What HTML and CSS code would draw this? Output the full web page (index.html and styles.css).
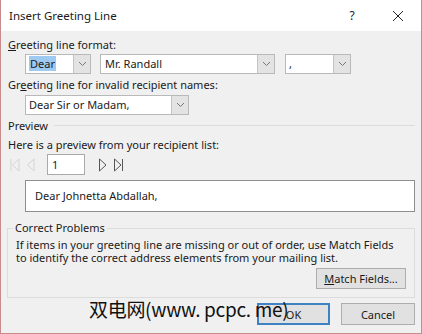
FILE: index.html
```html
<!DOCTYPE html>
<html>
<head>
<meta charset="utf-8">
<link rel="stylesheet" href="styles.css">
</head>
<body>
<div class="dialog">
  <div class="titlebar">
    <span class="title">Insert Greeting Line</span>
    <span class="help">?</span>
    <svg class="close" width="12" height="12" viewBox="0 0 12 12"><path d="M1 1L11 11M11 1L1 11" stroke="#222" stroke-width="1" fill="none"/></svg>
  </div>
  <div class="content">
    <div class="label l1"><u>G</u>reeting line format:</div>
    <div class="row combos">
      <div class="combo c-dear"><span class="val"><span class="sel">Dear</span></span><span class="arrow"><svg width="9" height="6" viewBox="0 0 9 6"><path d="M1 1L4.5 4.5L8 1" stroke="#777" fill="none"/></svg></span></div>
      <div class="combo c-name"><span class="val">Mr. Randall</span><span class="arrow"><svg width="9" height="6" viewBox="0 0 9 6"><path d="M1 1L4.5 4.5L8 1" stroke="#777" fill="none"/></svg></span></div>
      <div class="combo c-punct"><span class="val">,</span><span class="arrow"><svg width="9" height="6" viewBox="0 0 9 6"><path d="M1 1L4.5 4.5L8 1" stroke="#777" fill="none"/></svg></span></div>
    </div>
    <div class="label l2">Gr<u>e</u>eting line for invalid recipient names:</div>
    <div class="row r2">
      <div class="combo c-invalid"><span class="val">Dear Sir or Madam,</span><span class="arrow"><svg width="9" height="6" viewBox="0 0 9 6"><path d="M1 1L4.5 4.5L8 1" stroke="#777" fill="none"/></svg></span></div>
    </div>
    <div class="section"><span>Preview</span><span class="rule"></span></div>
    <div class="label l3">Here is a preview from your recipient list:</div>
    <div class="nav">
      <svg class="nav-prev" width="26" height="14" viewBox="0 0 26 14"><path d="M1 1V13M9 1L2.5 7L9 13Z" stroke="#d4d4d4" fill="none"/><path d="M24 1L17.5 7L24 13Z" stroke="#d4d4d4" fill="none"/></svg>
      <div class="recno">1</div>
      <svg class="nav-next" width="26" height="14" viewBox="0 0 26 14"><path d="M1.5 1L8 7L1.5 13Z" stroke="#555" fill="none"/><path d="M16.5 1L23 7L16.5 13Z M24.5 1V13" stroke="#555" fill="none"/></svg>
    </div>
    <div class="preview">Dear Johnetta Abdallah,</div>
    <div class="group">
      <div class="legend">Correct Problems</div>
      <p class="help-text">If items in your greeting line are missing or out of order, use Match Fields to identify the correct address elements from your mailing list.</p>
      <div class="group-actions"><div class="btn match"><u>M</u>atch Fields...</div></div>
    </div>
    <div class="actions">
      <div class="btn ok">OK</div>
      <div class="btn cancel">Cancel</div>
    </div>
  </div>
  <div class="watermark">双电网(www. pcpc. me)</div>
</div>
</body>
</html>
```
FILE: styles.css
```css
* { box-sizing: border-box; }
html, body { margin: 0; padding: 0; background: #f0f0f0; }
body { font-family: "Segoe UI", "Noto Sans", "Open Sans", sans-serif; font-size: 11px; color: #1a1a1a; }
.dialog { width: 422px; height: 334px; border: 1px solid #c98a8c; border-top: 0; background: #f0f0f0; position: relative; overflow: hidden; display: flex; flex-direction: column; }
.titlebar { height: 31px; flex: none; background: #fff; display: flex; align-items: center; padding-left: 8px; }
.title { font-size: 11.5px; flex: 1; }
.help { font-size: 12px; width: 20px; text-align: center; margin-right: 30px; }
.close { margin-right: 17px; }
.content { padding: 0 6px 0 7px; display: flex; flex-direction: column; }
.label { height: 14px; line-height: 14px; }
.l1 { margin-top: 7px; }
.row { display: flex; padding-left: 17px; }
.combos { margin-top: 2px; gap: 9px; }
.combo { height: 20px; display: flex; background: #fff; border: 1px solid #b9b9b9; }
.combo .val { flex: 1; padding-left: 3px; line-height: 18px; white-space: nowrap; }
.combo .arrow { width: 17px; background: #e3e3e3; border-left: 1px solid #c4c4c4; display: flex; align-items: center; justify-content: center; }
.sel { background: #9ec9f0; padding: 0 1px; }
.c-name .val { padding-left: 4px; }
.c-dear { width: 66px; }
.c-name { width: 175px; }
.c-punct { width: 66px; margin-left: 1px; }
.c-invalid { width: 164px; }
.l2 { margin-top: 4px; }
.r2 { margin-top: 3px; }
.section { display: flex; align-items: center; gap: 6px; margin-top: 3px; height: 14px; }
.section .rule { flex: 1; border-top: 1px solid #dcdcdc; }
.l3 { margin-top: 6px; }
.nav { display: flex; align-items: center; margin-top: 2px; height: 21px; padding-left: 2px; }
.nav-prev { margin-right: 11px; }
.recno { width: 38px; height: 21px; background: #fff; border: 1px solid #a9a9a9; padding-left: 4px; line-height: 19px; margin-right: 13px; }
.preview { margin: 5px 0 0 17px; height: 32px; background: #fff; border: 1px solid #8f8f8f; padding-left: 9px; line-height: 30px; }
.group { position: relative; margin: 16px 0 0 -1px; border: 1px solid #dcdcdc; height: 70px; padding: 10px 8px 0 8px; }
.legend { position: absolute; top: -8px; left: 5px; padding: 0 2px; background: #f0f0f0; line-height: 14px; }
.help-text { margin: 0; line-height: 12.5px; }
.group-actions { display: flex; justify-content: flex-end; margin-top: 4px; }
.btn { height: 21px; border: 1px solid #adadad; background: #e1e1e1; display: flex; align-items: center; justify-content: center; }
.match { width: 90px; }
.actions { display: flex; justify-content: flex-end; gap: 11px; margin-top: 5px; }
.ok { width: 73px; height: 22px; border: 2px solid #3e82c4; }
.cancel { width: 74px; height: 22px; }
.watermark { position: absolute; left: 88px; top: 297px; font-family: "Noto Sans CJK SC", "DejaVu Sans", sans-serif; font-size: 19px; color: #111; letter-spacing: -0.3px; line-height: 24px; white-space: nowrap; }
```
